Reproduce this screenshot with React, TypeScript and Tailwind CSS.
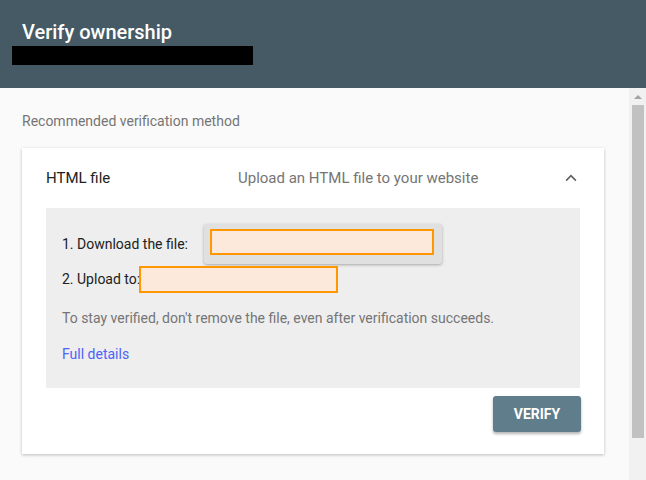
import React from 'react';

export default function App() {
  return (
    <div className="w-[646px] h-[480px] flex flex-col overflow-hidden bg-[#fafafa] font-['Roboto',sans-serif]">
      {/* Header */}
      <header className="h-[88px] shrink-0 bg-[#455a64] pl-[22px] pt-[19px]">
        <h1 className="text-[20px] leading-[26px] font-medium text-white">Verify ownership</h1>
        <div className="-ml-[10px] mt-[1px] w-[241px] h-[19px] bg-black" />
      </header>

      <div className="flex-1 flex min-h-0">
        {/* Main */}
        <main className="flex-1 pl-[22px] pr-[25px] pt-[24px]">
          <p className="text-[14px] leading-[18px] text-[#757575]">Recommended verification method</p>

          <section className="mt-[18px] bg-white shadow-[0_1px_3px_rgba(0,0,0,0.25)] pb-[22px]">
            <div className="h-[60px] flex items-center pl-[24px] pr-[24px]">
              <span className="w-[192px] text-[15px] text-[#212121]">HTML file</span>
              <span className="flex-1 text-[15px] text-[#757575]">Upload an HTML file to your website</span>
              <svg width="18" height="18" viewBox="0 0 24 24" className="text-[#616161]">
                <path d="M5.5 15.5l6.5-6.5 6.5 6.5" fill="none" stroke="currentColor" strokeWidth="2.2" />
              </svg>
            </div>

            <div className="mx-[24px] bg-[#eeeeee] h-[180px] pl-[16px] pt-[16px]">
              <div className="flex items-center text-[14px] text-[#212121]">
                <span>1. Download the file:</span>
                <div className="ml-[16px] w-[238px] h-[40px] rounded-[3px] bg-[#e0e0e0] shadow-[0_1px_3px_rgba(0,0,0,0.3)] pl-[6px] pt-[5px]">
                  <div className="w-[224px] h-[26px] border-2 border-[#ff9800] bg-[#fde9dc]" />
                </div>
              </div>
              <div className="mt-[2px] flex items-center text-[14px] text-[#212121]">
                <span>2. Upload to:</span>
                <div className="-ml-[1px] w-[199px] h-[27px] border-2 border-[#ff9800] bg-[#fde9dc]" />
              </div>
              <p className="mt-[15px] text-[14px] text-[#757575]">To stay verified, don't remove the file, even after verification succeeds.</p>
              <a className="block mt-[15px] text-[14px] text-[#4d63f7]" href="#">Full details</a>
            </div>

            <div className="flex justify-end mr-[23px] mt-[8px]">
              <button className="w-[88px] h-[36px] rounded-[3px] bg-[#607d8b] text-white text-[14px] font-bold shadow-[0_2px_3px_rgba(0,0,0,0.3)]">
                VERIFY
              </button>
            </div>
          </section>
        </main>

        {/* Scrollbar */}
        <div className="w-[17px] shrink-0 bg-[#f1f1f1] flex flex-col items-center">
          <div className="h-[17px] flex items-center justify-center">
            <div className="w-0 h-0 border-l-[4px] border-r-[4px] border-b-[4px] border-l-transparent border-r-transparent border-b-[#a3a3a3]" />
          </div>
          <div className="w-[12px] h-[333px] bg-[#c1c1c1]" />
        </div>
      </div>
    </div>
  );
}
